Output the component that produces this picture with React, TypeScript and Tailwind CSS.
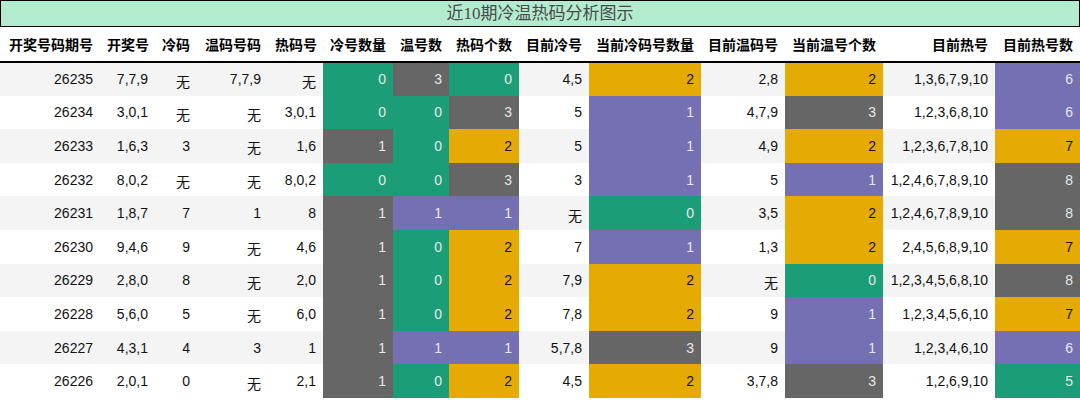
import React from "react";

type C = "g" | "k" | "o" | "p";
type Cell = string | [string, C];

const bg: Record<C, string> = {
  g: "bg-[#1b9e77] text-[#e8e8e8]",
  k: "bg-[#666666] text-[#e8e8e8]",
  o: "bg-[#e6ab02] text-[#111111]",
  p: "bg-[#7570b3] text-[#e8e8e8]",
};

const headers = [
  "开奖号码期号",
  "开奖号",
  "冷码",
  "温码号码",
  "热码号",
  "冷号数量",
  "温号数",
  "热码个数",
  "目前冷号",
  "当前冷码号数量",
  "目前温码号",
  "当前温号个数",
  "目前热号",
  "目前热号数",
];

const widths = [100, 55, 42, 71, 55, 70, 56, 70, 70, 112, 84, 98, 112, 85];

const rows: Cell[][] = [
  ["26235", "7,7,9", "无", "7,7,9", "无", ["0", "g"], ["3", "k"], ["0", "g"], "4,5", ["2", "o"], "2,8", ["2", "o"], "1,3,6,7,9,10", ["6", "p"]],
  ["26234", "3,0,1", "无", "无", "3,0,1", ["0", "g"], ["0", "g"], ["3", "k"], "5", ["1", "p"], "4,7,9", ["3", "k"], "1,2,3,6,8,10", ["6", "p"]],
  ["26233", "1,6,3", "3", "无", "1,6", ["1", "k"], ["0", "g"], ["2", "o"], "5", ["1", "p"], "4,9", ["2", "o"], "1,2,3,6,7,8,10", ["7", "o"]],
  ["26232", "8,0,2", "无", "无", "8,0,2", ["0", "g"], ["0", "g"], ["3", "k"], "3", ["1", "p"], "5", ["1", "p"], "1,2,4,6,7,8,9,10", ["8", "k"]],
  ["26231", "1,8,7", "7", "1", "8", ["1", "k"], ["1", "p"], ["1", "p"], "无", ["0", "g"], "3,5", ["2", "o"], "1,2,4,6,7,8,9,10", ["8", "k"]],
  ["26230", "9,4,6", "9", "无", "4,6", ["1", "k"], ["0", "g"], ["2", "o"], "7", ["1", "p"], "1,3", ["2", "o"], "2,4,5,6,8,9,10", ["7", "o"]],
  ["26229", "2,8,0", "8", "无", "2,0", ["1", "k"], ["0", "g"], ["2", "o"], "7,9", ["2", "o"], "无", ["0", "g"], "1,2,3,4,5,6,8,10", ["8", "k"]],
  ["26228", "5,6,0", "5", "无", "6,0", ["1", "k"], ["0", "g"], ["2", "o"], "7,8", ["2", "o"], "9", ["1", "p"], "1,2,3,4,5,6,10", ["7", "o"]],
  ["26227", "4,3,1", "4", "3", "1", ["1", "k"], ["1", "p"], ["1", "p"], "5,7,8", ["3", "k"], "9", ["1", "p"], "1,2,3,4,6,10", ["6", "p"]],
  ["26226", "2,0,1", "0", "无", "2,1", ["1", "k"], ["0", "g"], ["2", "o"], "4,5", ["2", "o"], "3,7,8", ["3", "k"], "1,2,6,9,10", ["5", "g"]],
];

export default function App() {
  return (
    <div className="w-[1080px] h-[400px] overflow-hidden bg-white font-['Liberation_Sans','Noto_Sans_CJK_SC',sans-serif]">
      <div className="h-[27px] border border-black bg-[#b3ebcf] flex items-center justify-center text-[17px] leading-none text-[#4a4a4a] font-['Liberation_Serif','Noto_Sans_CJK_SC',serif]">
        近10期冷温热码分析图示
      </div>
      <table className="table-fixed w-[1080px] border-collapse">
        <colgroup>
          {widths.map((w, i) => (
            <col key={i} style={{ width: w }} />
          ))}
        </colgroup>
        <thead>
          <tr className="h-[35px] border-b-2 border-black">
            {headers.map((h) => (
              <th
                key={h}
                className="px-[7px] text-right text-[14px] font-bold text-black whitespace-nowrap font-['Noto_Sans_CJK_SC',sans-serif] leading-none"
              >
                {h}
              </th>
            ))}
          </tr>
        </thead>
        <tbody>
          {rows.map((r, ri) => (
            <tr key={ri} className={`h-[33.6px] ${ri % 2 === 0 ? "bg-[#f4f4f4]" : "bg-white"}`}>
              {r.map((c, ci) => {
                const isArr = Array.isArray(c);
                const text = isArr ? c[0] : c;
                const cls = isArr ? bg[c[1]] : "text-[#111111]";
                return (
                  <td
                    key={ci}
                    className={`p-0 pr-[7px] text-right text-[14px] leading-none whitespace-nowrap ${cls}`}
                  >
                    {text === "无" ? (
                      <span className="relative top-[2px] font-['Noto_Sans_CJK_SC',sans-serif]">无</span>
                    ) : (
                      text
                    )}
                  </td>
                );
              })}
            </tr>
          ))}
        </tbody>
      </table>
    </div>
  );
}
